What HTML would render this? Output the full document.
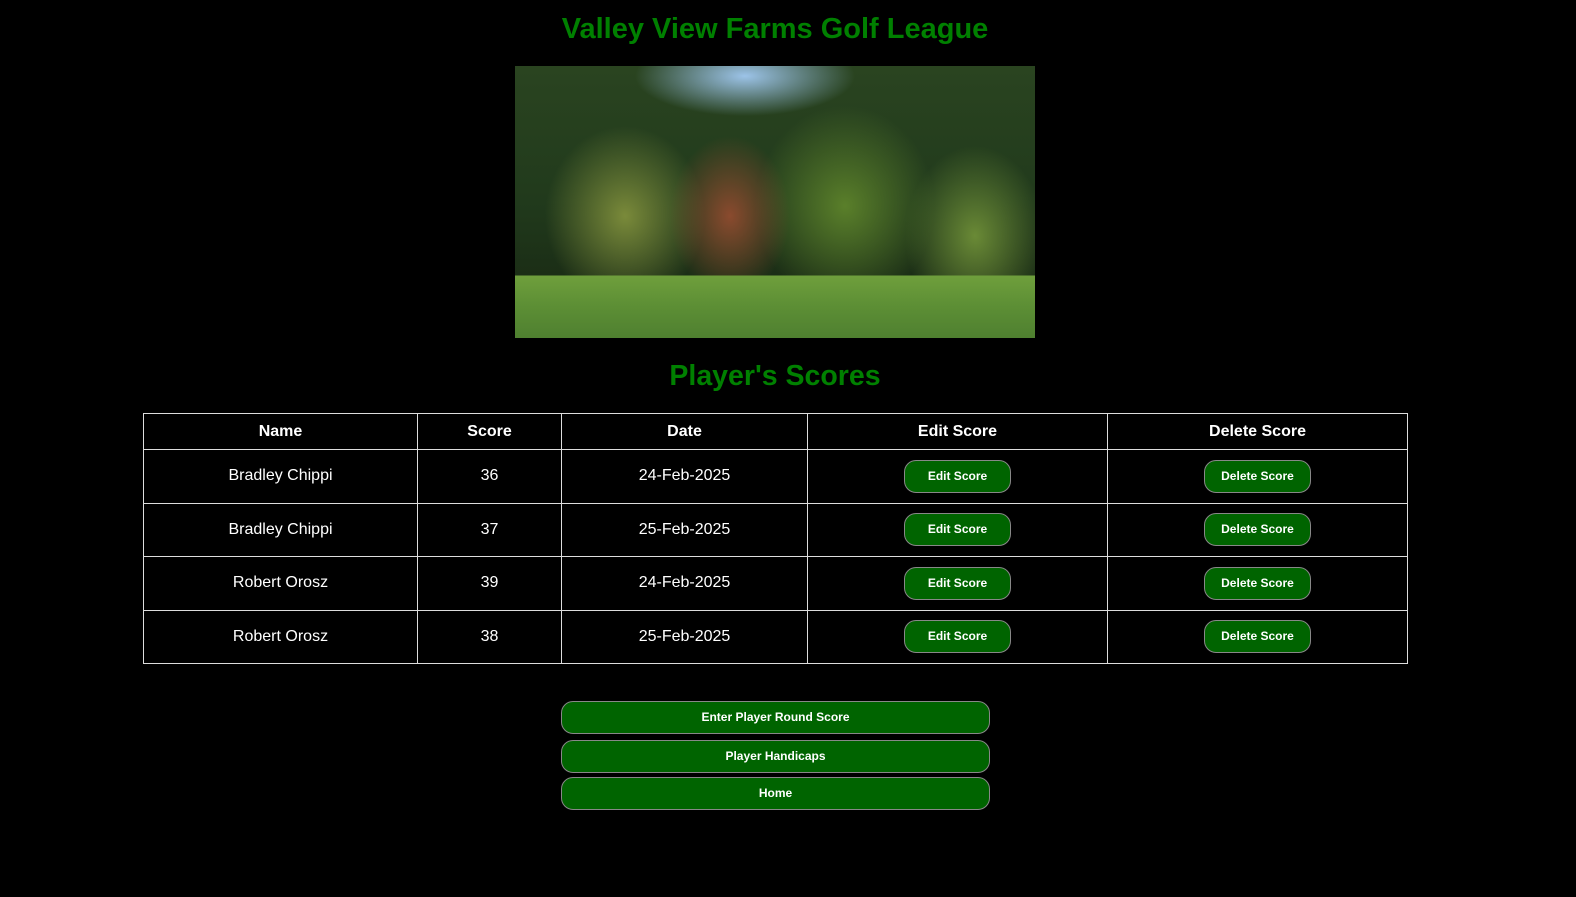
<!DOCTYPE html>
<html><head><meta charset="utf-8"><style>
body{margin:0;background:#000;font-family:"Liberation Sans",Arial,sans-serif;color:#fff;width:1576px;height:897px;overflow:hidden;position:relative}
h1{position:absolute;top:11px;left:0;width:1550px;text-align:center;margin:0;color:#008000;font-size:29px;font-weight:bold;line-height:36px}
h2{position:absolute;top:358px;left:0;width:1550px;text-align:center;margin:0;color:#008000;font-size:28.5px;font-weight:bold;line-height:36px}
.img{position:absolute;left:515px;top:66px;width:520px;height:272px;overflow:hidden;
background:linear-gradient(180deg,rgba(0,0,0,0) 0,rgba(0,0,0,0) 77%,#6f9f3c 77%,#5d8f35 88%,#4f8030 100%),
radial-gradient(ellipse 110px 40px at 230px 10px,#9cc3e8,rgba(120,170,220,0) 100%),
radial-gradient(ellipse 60px 80px at 215px 150px,#8a4a2e,rgba(0,0,0,0) 100%),
radial-gradient(ellipse 80px 90px at 110px 150px,#7a8a3a,rgba(0,0,0,0) 100%),
radial-gradient(ellipse 90px 100px at 330px 140px,#5a7f2a,rgba(0,0,0,0) 100%),
radial-gradient(ellipse 70px 90px at 460px 170px,#6a8a36,rgba(0,0,0,0) 100%),
linear-gradient(180deg,#2a4420 0,#213a1c 50%,#1b2e16 77%)}
table{position:absolute;left:143px;top:413px;width:1265px;border-collapse:collapse;table-layout:fixed}
td,th{border:1px solid #ddd;text-align:center;font-size:16px;padding:0}
th{height:35px;font-weight:bold}
td{height:52.5px}
.b{display:inline-block;background:#006400;color:#fff;border:1px solid #888;border-radius:12px;font-weight:bold;font-size:12px;height:31px;line-height:31px;width:105px}
.w{position:absolute;left:561px;width:427px;height:31px;line-height:31px;background:#006400;border:1px solid #888;border-radius:12px;text-align:center;font-weight:bold;font-size:12px}
</style></head><body>
<h1>Valley View Farms Golf League</h1>
<div class="img"></div>
<h2>Player's Scores</h2>
<table>
<tr><th style="width:273px">Name</th><th style="width:143px">Score</th><th style="width:245px">Date</th><th style="width:299px">Edit Score</th><th>Delete Score</th></tr>
<tr><td>Bradley Chippi</td><td>36</td><td>24-Feb-2025</td><td><span class="b">Edit Score</span></td><td><span class="b">Delete Score</span></td></tr>
<tr><td>Bradley Chippi</td><td>37</td><td>25-Feb-2025</td><td><span class="b">Edit Score</span></td><td><span class="b">Delete Score</span></td></tr>
<tr><td>Robert Orosz</td><td>39</td><td>24-Feb-2025</td><td><span class="b">Edit Score</span></td><td><span class="b">Delete Score</span></td></tr>
<tr><td>Robert Orosz</td><td>38</td><td>25-Feb-2025</td><td><span class="b">Edit Score</span></td><td><span class="b">Delete Score</span></td></tr>
</table>
<div class="w" style="top:701px">Enter Player Round Score</div>
<div class="w" style="top:740px">Player Handicaps</div>
<div class="w" style="top:777px">Home</div>
</body></html>
